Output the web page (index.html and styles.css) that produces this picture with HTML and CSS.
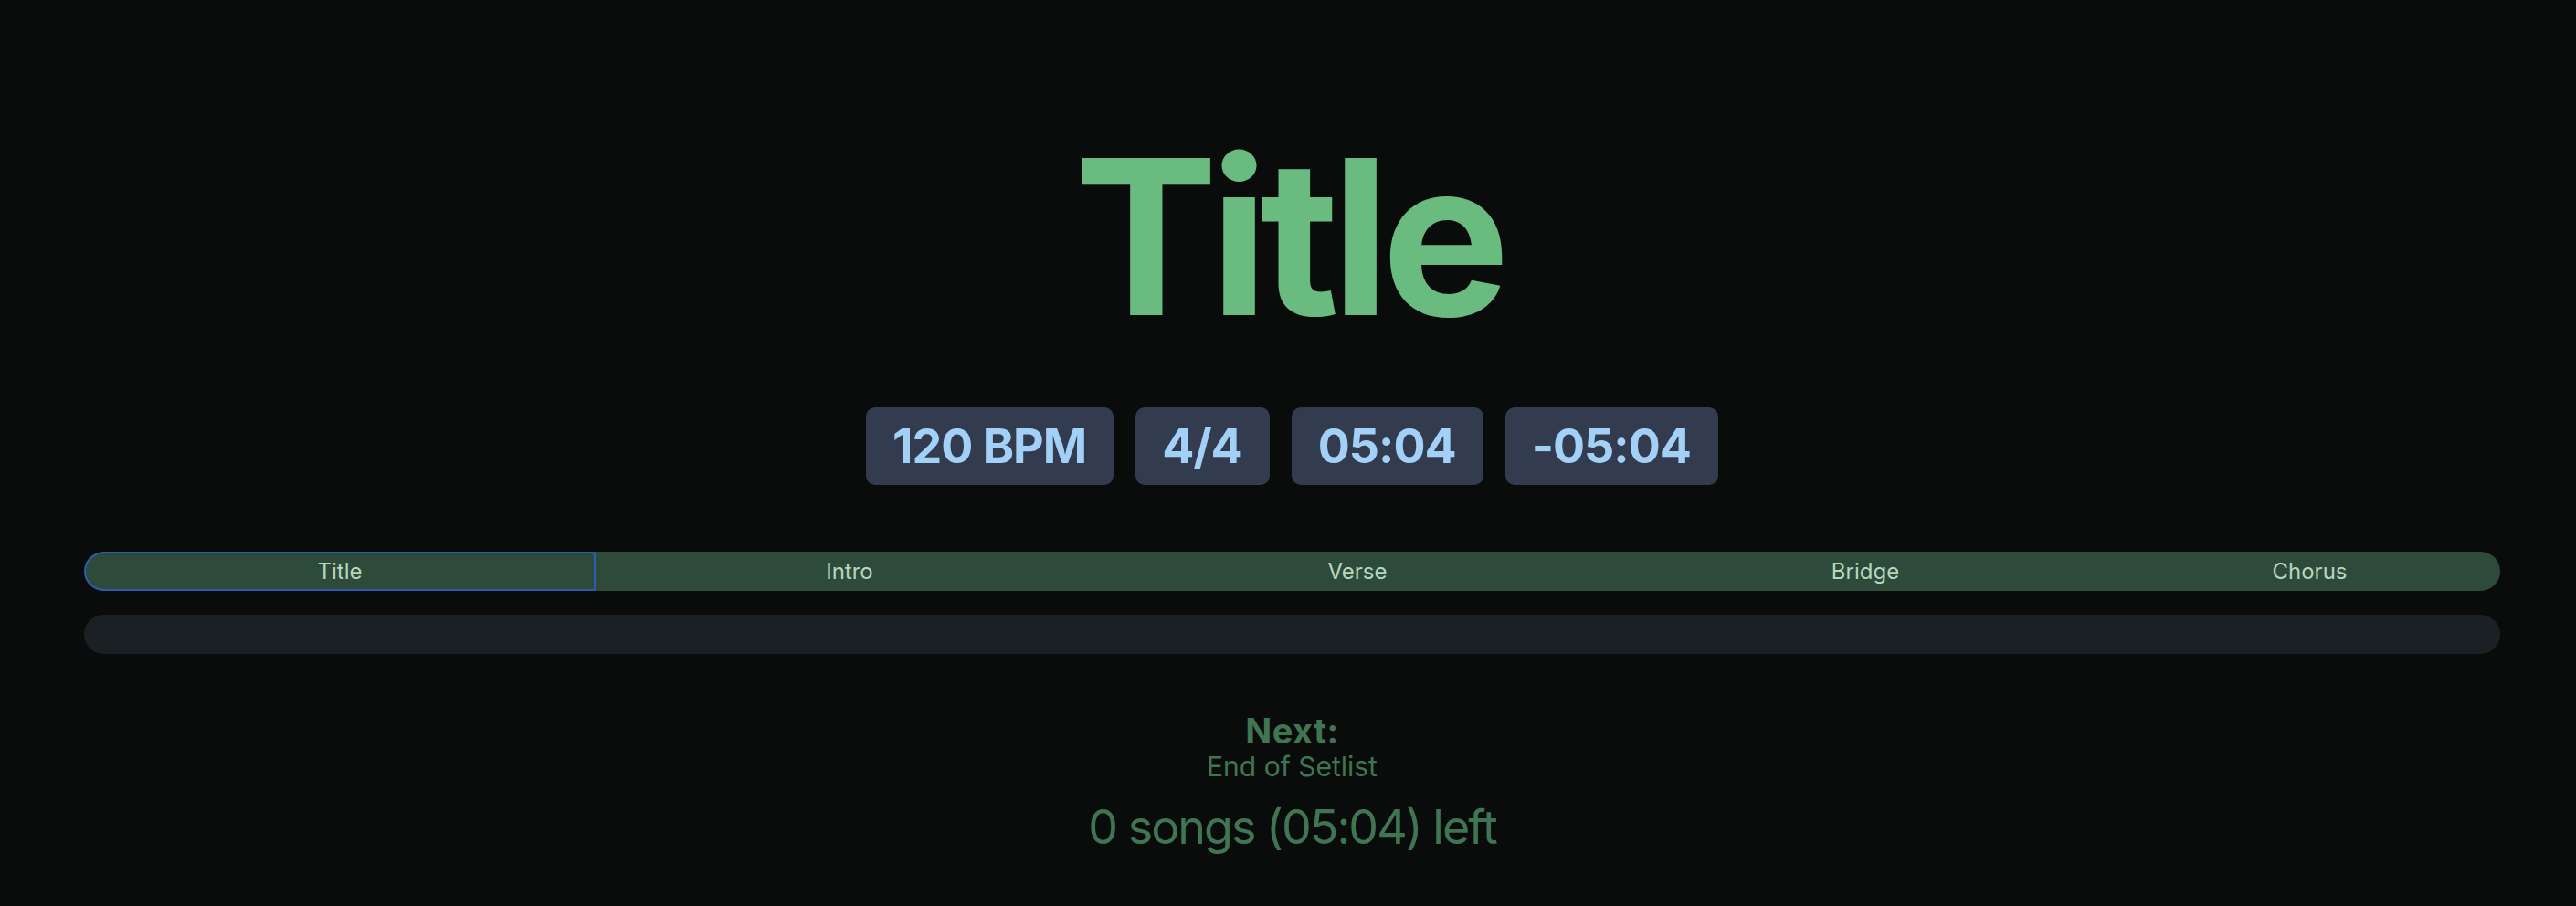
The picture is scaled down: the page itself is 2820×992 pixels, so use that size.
FILE: index.html
```html
<!DOCTYPE html>
<html lang="en">
<head>
<meta charset="utf-8">
<title>Title</title>
<link rel="stylesheet" href="styles.css">
</head>
<body>
<main class="stage">
  <h1 class="song-title">Title</h1>
  <div class="badges">
    <span class="badge">120 BPM</span>
    <span class="badge">4/4</span>
    <span class="badge">05:04</span>
    <span class="badge">-05:04</span>
  </div>
  <div class="sections">
    <div class="section active" style="flex-grow:64">Title</div>
    <div class="section" style="flex-grow:64">Intro</div>
    <div class="section" style="flex-grow:64">Verse</div>
    <div class="section" style="flex-grow:64">Bridge</div>
    <div class="section" style="flex-grow:48">Chorus</div>
  </div>
  <div class="progress"></div>
  <div class="next">
    <div class="next-label">Next:</div>
    <div class="next-song">End of Setlist</div>
    <div class="remaining">0 songs (05:04) left</div>
  </div>
</main>
</body>
</html>
```

FILE: styles.css
```css
html, body {
  margin: 0;
  padding: 0;
  background: #0a0c0c;
}

body {
  font-family: Inter, "Noto Sans", "Liberation Sans", sans-serif;
  height: 992px;
  overflow: hidden;
}

.stage {
  display: flex;
  flex-direction: column;
  align-items: stretch;
  padding: 141px 83px 0 92px;
}

.song-title {
  margin: 0;
  text-align: center;
  font-size: 236px;
  line-height: 1;
  font-weight: 700;
  color: #69bb7f;
  letter-spacing: -9px;
  text-indent: -9px;
}

.badges {
  display: flex;
  justify-content: center;
  gap: 24px;
  margin-top: 69px;
}

.badge {
  background: #323c4e;
  color: #a3d0f6;
  font-size: 52px;
  font-weight: 700;
  line-height: 63px;
  padding: 11px 30px 11px 29px;
  letter-spacing: -1px;
  border-radius: 10px;
}

.sections {
  display: flex;
  margin-top: 73px;
  height: 43px;
  border-radius: 22px;
  background: #2e4a3a;
  overflow: hidden;
}

.section {
  flex-basis: 0;
  display: flex;
  align-items: center;
  justify-content: center;
  color: #b6d6bf;
  font-size: 24px;
  box-sizing: border-box;
}

.section.active {
  border: 2px solid #2c5cb8;
  border-radius: 22px 4px 4px 22px;
  box-shadow: 1px 0 0 #4d6456;
}

.progress {
  margin-top: 26px;
  height: 43px;
  border-radius: 22px;
  background: #1b2024;
}

.next {
  display: flex;
  flex-direction: column;
  align-items: center;
  color: #3f7552;
  margin-top: 63px;
}

.next-label {
  font-size: 38px;
  font-weight: 700;
  line-height: 43px;
  letter-spacing: 0.5px;
}

.next-song {
  font-size: 30px;
  line-height: 34px;
}

.remaining {
  font-size: 52px;
  line-height: 63px;
  margin-top: 18px;
  letter-spacing: -2px;
}
```
